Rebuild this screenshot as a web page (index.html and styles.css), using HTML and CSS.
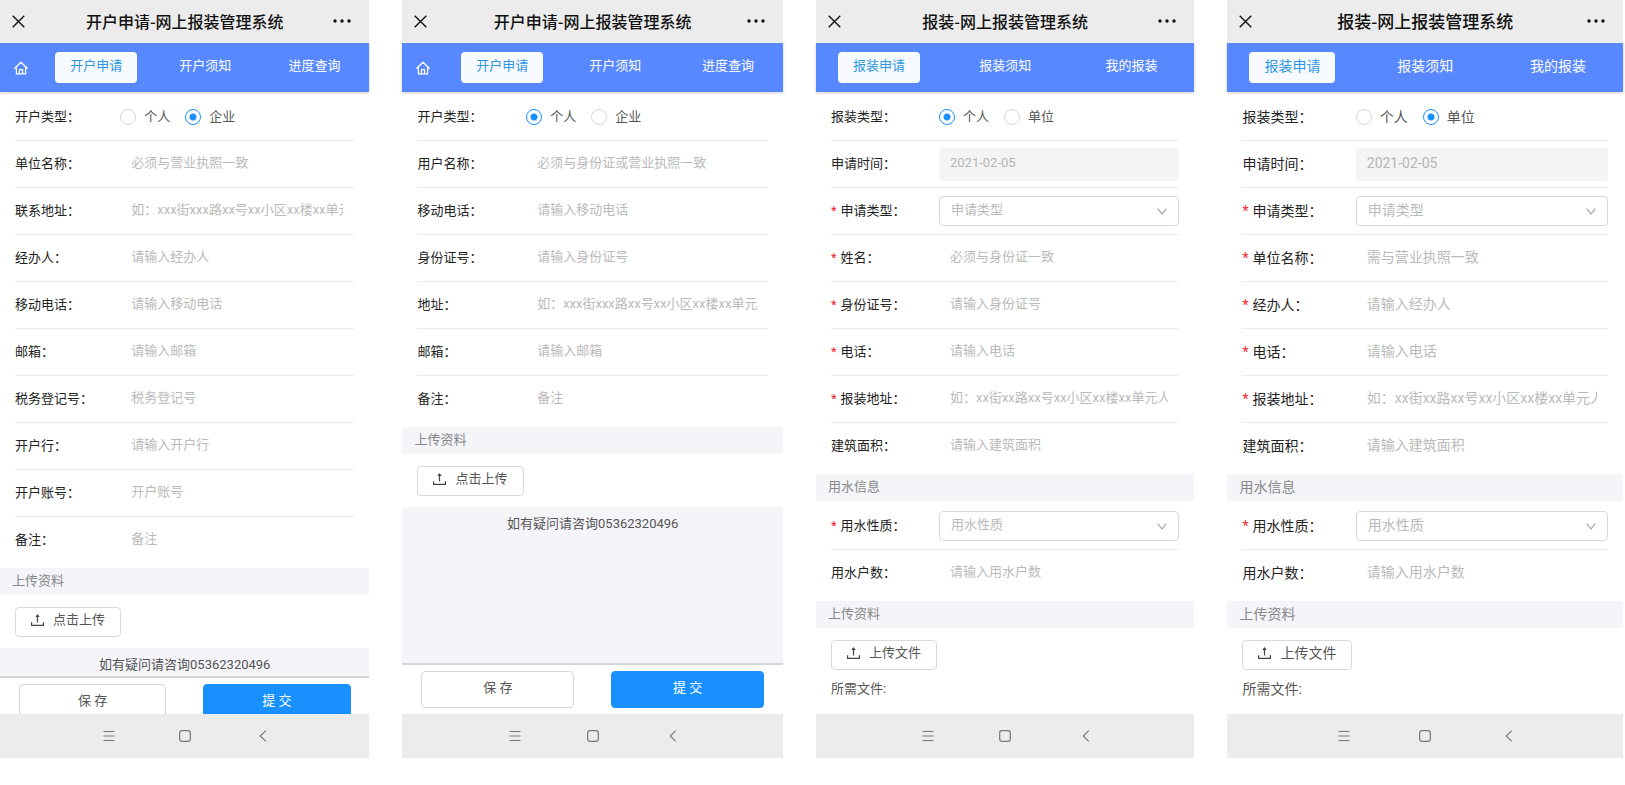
FILE: index.html
```html
<!DOCTYPE html>
<html lang="zh-CN">
<head>
  <meta charset="UTF-8" />
  <meta name="viewport" content="width=device-width, initial-scale=1.0"/>
  <title>网上报装管理系统</title>
  <link rel="stylesheet" href="styles.css">
</head>
<body>
  <!-- Shared icons -->
  <svg class="icon-defs" aria-hidden="true">
    <symbol id="i-close" viewBox="0 0 13 13"><path d="M.7.7l11.6 11.6M12.3.7L.7 12.3" fill="none" stroke="#111" stroke-width="1.4"/></symbol>
    <symbol id="i-more" viewBox="0 0 18 4"><g fill="#111"><circle cx="2" cy="2" r="1.7"/><circle cx="9" cy="2" r="1.7"/><circle cx="16" cy="2" r="1.7"/></g></symbol>
    <symbol id="i-home" viewBox="0 0 14 14"><path d="M.7 7.3L7 1.2l6.3 6.1M2.4 6v6.9h9.2V6M5.4 12.9V8.7h3.2v4.2" fill="none" stroke="#fff" stroke-width="1.2" stroke-linecap="round" stroke-linejoin="round"/></symbol>
    <symbol id="i-upload" viewBox="0 0 13 13"><path d="M.6 8.2v3.2h11.8V8.2M6.500 8.400V1.500" fill="none" stroke="#444" stroke-width="1.2"/><path d="M6.500 0L4.300 3h4.400z" fill="#444"/></symbol>
    <symbol id="i-menu" viewBox="0 0 12 12"><path d="M.5 1.500h11M.5 6h11M.5 10.500h11" fill="none" stroke="#777" stroke-width="1"/></symbol>
    <symbol id="i-square" viewBox="0 0 12 12"><rect x=".7" y=".7" width="10.6" height="10.6" rx="2.2" fill="none" stroke="#777" stroke-width="1.2"/></symbol>
    <symbol id="i-back" viewBox="0 0 12 12"><path d="M11.8.7L6.2 6l5.6 5.3" fill="none" stroke="#777" stroke-width="1.1"/></symbol>
    <symbol id="i-down" viewBox="0 0 10 7"><path d="M.7.7L5 6 9.3.7" fill="none" stroke="#aaa" stroke-width="1.2"/></symbol>
  </svg>

  <main class="phones">
    <!-- Open account: company -->
    <section class="phone">
      <header class="title-bar">
        <button class="icon-btn close" aria-label="关闭"><svg width="13" height="13"><use href="#i-close"/></svg></button>
        <h1>开户申请-网上报装管理系统</h1>
        <button class="icon-btn more" aria-label="更多"><svg width="18" height="4"><use href="#i-more"/></svg></button>
      </header>
      <nav class="tabs with-home">
        <a class="home" href="#" aria-label="首页"><svg width="14" height="14"><use href="#i-home"/></svg></a>
        <a class="tab active" href="#">开户申请</a>
        <a class="tab" href="#">开户须知</a>
        <a class="tab" href="#">进度查询</a>
      </nav>
      <form class="content">
        <div class="fields">
          <div class="row" role="radiogroup" aria-labelledby="a-type">
            <span class="label" id="a-type">开户类型：</span>
            <label class="radio"><input type="radio" name="a-type">个人</label>
            <label class="radio"><input type="radio" name="a-type" checked>企业</label>
          </div>
          <div class="row"><label class="label" for="a-name">单位名称：</label><input class="text" id="a-name" type="text" placeholder="必须与营业执照一致"></div>
          <div class="row"><label class="label" for="a-addr">联系地址：</label><input class="text" id="a-addr" type="text" placeholder="如：xxx街xxx路xx号xx小区xx楼xx单元"></div>
          <div class="row"><label class="label" for="a-agent">经办人：</label><input class="text" id="a-agent" type="text" placeholder="请输入经办人"></div>
          <div class="row"><label class="label" for="a-phone">移动电话：</label><input class="text" id="a-phone" type="tel" placeholder="请输入移动电话"></div>
          <div class="row"><label class="label" for="a-mail">邮箱：</label><input class="text" id="a-mail" type="email" placeholder="请输入邮箱"></div>
          <div class="row"><label class="label" for="a-tax">税务登记号：</label><input class="text" id="a-tax" type="text" placeholder="税务登记号"></div>
          <div class="row"><label class="label" for="a-bank">开户行：</label><input class="text" id="a-bank" type="text" placeholder="请输入开户行"></div>
          <div class="row"><label class="label" for="a-account">开户账号：</label><input class="text" id="a-account" type="text" placeholder="开户账号"></div>
          <div class="row"><label class="label" for="a-note">备注：</label><input class="text" id="a-note" type="text" placeholder="备注"></div>
        </div>
        <h2 class="section-title">上传资料</h2>
        <div class="upload">
          <button class="btn upload-btn" type="button"><svg width="13" height="13"><use href="#i-upload"/></svg>点击上传</button>
        </div>
        <p class="hint">如有疑问请咨询05362320496</p>
        <div class="actions">
          <button class="btn" type="button">保 存</button>
          <button class="btn primary" type="button">提 交</button>
        </div>
      </form>
      <footer class="system-bar">
        <button class="icon-btn" aria-label="菜单"><svg width="12" height="12"><use href="#i-menu"/></svg></button>
        <button class="icon-btn" aria-label="主屏幕"><svg width="12" height="12"><use href="#i-square"/></svg></button>
        <button class="icon-btn" aria-label="返回"><svg width="12" height="12"><use href="#i-back"/></svg></button>
      </footer>
    </section>

    <!-- Open account: personal -->
    <section class="phone">
      <header class="title-bar">
        <button class="icon-btn close" aria-label="关闭"><svg width="13" height="13"><use href="#i-close"/></svg></button>
        <h1>开户申请-网上报装管理系统</h1>
        <button class="icon-btn more" aria-label="更多"><svg width="18" height="4"><use href="#i-more"/></svg></button>
      </header>
      <nav class="tabs with-home">
        <a class="home" href="#" aria-label="首页"><svg width="14" height="14"><use href="#i-home"/></svg></a>
        <a class="tab active" href="#">开户申请</a>
        <a class="tab" href="#">开户须知</a>
        <a class="tab" href="#">进度查询</a>
      </nav>
      <form class="content">
        <div class="fields">
          <div class="row" role="radiogroup" aria-labelledby="b-type">
            <span class="label" id="b-type">开户类型：</span>
            <label class="radio"><input type="radio" name="b-type" checked>个人</label>
            <label class="radio"><input type="radio" name="b-type">企业</label>
          </div>
          <div class="row"><label class="label" for="b-name">用户名称：</label><input class="text" id="b-name" type="text" placeholder="必须与身份证或营业执照一致"></div>
          <div class="row"><label class="label" for="b-phone">移动电话：</label><input class="text" id="b-phone" type="tel" placeholder="请输入移动电话"></div>
          <div class="row"><label class="label" for="b-card">身份证号：</label><input class="text" id="b-card" type="text" placeholder="请输入身份证号"></div>
          <div class="row"><label class="label" for="b-addr">地址：</label><input class="text" id="b-addr" type="text" placeholder="如：xxx街xxx路xx号xx小区xx楼xx单元"></div>
          <div class="row"><label class="label" for="b-mail">邮箱：</label><input class="text" id="b-mail" type="email" placeholder="请输入邮箱"></div>
          <div class="row"><label class="label" for="b-note">备注：</label><input class="text" id="b-note" type="text" placeholder="备注"></div>
        </div>
        <h2 class="section-title">上传资料</h2>
        <div class="upload">
          <button class="btn upload-btn" type="button"><svg width="13" height="13"><use href="#i-upload"/></svg>点击上传</button>
        </div>
        <p class="hint">如有疑问请咨询05362320496</p>
        <div class="actions">
          <button class="btn" type="button">保 存</button>
          <button class="btn primary" type="button">提 交</button>
        </div>
      </form>
      <footer class="system-bar">
        <button class="icon-btn" aria-label="菜单"><svg width="12" height="12"><use href="#i-menu"/></svg></button>
        <button class="icon-btn" aria-label="主屏幕"><svg width="12" height="12"><use href="#i-square"/></svg></button>
        <button class="icon-btn" aria-label="返回"><svg width="12" height="12"><use href="#i-back"/></svg></button>
      </footer>
    </section>

    <!-- Installation: personal -->
    <section class="phone">
      <header class="title-bar">
        <button class="icon-btn close" aria-label="关闭"><svg width="13" height="13"><use href="#i-close"/></svg></button>
        <h1>报装-网上报装管理系统</h1>
        <button class="icon-btn more" aria-label="更多"><svg width="18" height="4"><use href="#i-more"/></svg></button>
      </header>
      <nav class="tabs">
        <a class="tab active" href="#">报装申请</a>
        <a class="tab" href="#">报装须知</a>
        <a class="tab" href="#">我的报装</a>
      </nav>
      <form class="content">
        <div class="fields">
          <div class="row" role="radiogroup" aria-labelledby="c-type">
            <span class="label" id="c-type">报装类型：</span>
            <label class="radio"><input type="radio" name="c-type" checked>个人</label>
            <label class="radio"><input type="radio" name="c-type">单位</label>
          </div>
          <div class="row"><label class="label" for="c-date">申请时间：</label><input class="text" id="c-date" type="text" value="2021-02-05" disabled></div>
          <div class="row">
            <label class="label required" for="c-kind">申请类型：</label>
            <div class="select"><select id="c-kind"><option>申请类型</option></select><svg width="10" height="7"><use href="#i-down"/></svg></div>
          </div>
          <div class="row"><label class="label required" for="c-name">姓名：</label><input class="text" id="c-name" type="text" placeholder="必须与身份证一致"></div>
          <div class="row"><label class="label required" for="c-card">身份证号：</label><input class="text" id="c-card" type="text" placeholder="请输入身份证号"></div>
          <div class="row"><label class="label required" for="c-phone">电话：</label><input class="text" id="c-phone" type="tel" placeholder="请输入电话"></div>
          <div class="row"><label class="label required" for="c-addr">报装地址：</label><input class="text" id="c-addr" type="text" placeholder="如：xx街xx路xx号xx小区xx楼xx单元人"></div>
          <div class="row"><label class="label" for="c-area">建筑面积：</label><input class="text" id="c-area" type="text" placeholder="请输入建筑面积"></div>
        </div>
        <h2 class="section-title">用水信息</h2>
        <div class="fields">
          <div class="row">
            <label class="label required" for="c-water">用水性质：</label>
            <div class="select"><select id="c-water"><option>用水性质</option></select><svg width="10" height="7"><use href="#i-down"/></svg></div>
          </div>
          <div class="row"><label class="label" for="c-count">用水户数：</label><input class="text" id="c-count" type="text" placeholder="请输入用水户数"></div>
        </div>
        <h2 class="section-title">上传资料</h2>
        <div class="upload">
          <button class="btn upload-btn" type="button"><svg width="13" height="13"><use href="#i-upload"/></svg>上传文件</button>
          <p class="files">所需文件:</p>
        </div>
      </form>
      <footer class="system-bar">
        <button class="icon-btn" aria-label="菜单"><svg width="12" height="12"><use href="#i-menu"/></svg></button>
        <button class="icon-btn" aria-label="主屏幕"><svg width="12" height="12"><use href="#i-square"/></svg></button>
        <button class="icon-btn" aria-label="返回"><svg width="12" height="12"><use href="#i-back"/></svg></button>
      </footer>
    </section>

    <!-- Installation: company -->
    <section class="phone large">
      <header class="title-bar">
        <button class="icon-btn close" aria-label="关闭"><svg width="13" height="13"><use href="#i-close"/></svg></button>
        <h1>报装-网上报装管理系统</h1>
        <button class="icon-btn more" aria-label="更多"><svg width="18" height="4"><use href="#i-more"/></svg></button>
      </header>
      <nav class="tabs">
        <a class="tab active" href="#">报装申请</a>
        <a class="tab" href="#">报装须知</a>
        <a class="tab" href="#">我的报装</a>
      </nav>
      <form class="content">
        <div class="fields">
          <div class="row" role="radiogroup" aria-labelledby="d-type">
            <span class="label" id="d-type">报装类型：</span>
            <label class="radio"><input type="radio" name="d-type">个人</label>
            <label class="radio"><input type="radio" name="d-type" checked>单位</label>
          </div>
          <div class="row"><label class="label" for="d-date">申请时间：</label><input class="text" id="d-date" type="text" value="2021-02-05" disabled></div>
          <div class="row">
            <label class="label required" for="d-kind">申请类型：</label>
            <div class="select"><select id="d-kind"><option>申请类型</option></select><svg width="10" height="7"><use href="#i-down"/></svg></div>
          </div>
          <div class="row"><label class="label required" for="d-name">单位名称：</label><input class="text" id="d-name" type="text" placeholder="需与营业执照一致"></div>
          <div class="row"><label class="label required" for="d-agent">经办人：</label><input class="text" id="d-agent" type="text" placeholder="请输入经办人"></div>
          <div class="row"><label class="label required" for="d-phone">电话：</label><input class="text" id="d-phone" type="tel" placeholder="请输入电话"></div>
          <div class="row"><label class="label required" for="d-addr">报装地址：</label><input class="text" id="d-addr" type="text" placeholder="如：xx街xx路xx号xx小区xx楼xx单元人"></div>
          <div class="row"><label class="label" for="d-area">建筑面积：</label><input class="text" id="d-area" type="text" placeholder="请输入建筑面积"></div>
        </div>
        <h2 class="section-title">用水信息</h2>
        <div class="fields">
          <div class="row">
            <label class="label required" for="d-water">用水性质：</label>
            <div class="select"><select id="d-water"><option>用水性质</option></select><svg width="10" height="7"><use href="#i-down"/></svg></div>
          </div>
          <div class="row"><label class="label" for="d-count">用水户数：</label><input class="text" id="d-count" type="text" placeholder="请输入用水户数"></div>
        </div>
        <h2 class="section-title">上传资料</h2>
        <div class="upload">
          <button class="btn upload-btn" type="button"><svg width="13" height="13"><use href="#i-upload"/></svg>上传文件</button>
          <p class="files">所需文件:</p>
        </div>
      </form>
      <footer class="system-bar">
        <button class="icon-btn" aria-label="菜单"><svg width="12" height="12"><use href="#i-menu"/></svg></button>
        <button class="icon-btn" aria-label="主屏幕"><svg width="12" height="12"><use href="#i-square"/></svg></button>
        <button class="icon-btn" aria-label="返回"><svg width="12" height="12"><use href="#i-back"/></svg></button>
      </footer>
    </section>
  </main>
</body>
</html>
```

FILE: styles.css
```css
* {
  box-sizing: border-box;
}
body {
  margin: 0;
  background: #fff;
  color: #555;
  font-family: Roboto, "Noto Sans CJK SC", sans-serif;
}
h1, h2, p {
  margin: 0;
  font-weight: 400;
}
a {
  text-decoration: none;
}
button, input, select {
  font: inherit;
  margin: 0;
}
svg {
  display: block;
  flex: none;
}
.icon-defs {
  display: none;
}

.phones {
  display: grid;
  grid-template-columns: 369fr 380fr 378fr 395fr;
  gap: 33px;
  padding-right: 2px;
}
.phone {
  display: flex;
  flex-direction: column;
  height: calc(100vh - 27px);
  min-width: 0;
  font-size: 13px;
  line-height: 20px;
}
.phone.large {
  font-size: 14px;
}

/* Title bar */
.title-bar {
  flex: none;
  display: grid;
  grid-template-columns: 36px 1fr 36px;
  align-items: center;
  height: 43px;
  background: #ececec;
  border-bottom: 1px solid #f8f8ee;
}
.title-bar h1 {
  font-family: "Noto Sans CJK SC", sans-serif;
  font-size: 16px;
  font-weight: 500;
  line-height: 24px;
  color: #111;
  text-align: center;
  white-space: nowrap;
}
.large .title-bar h1 {
  font-size: 17px;
}
.icon-btn {
  display: flex;
  padding: 0;
  border: 0;
  background: none;
}
.close {
  padding-left: 12px;
}

/* Tabs */
.tabs {
  flex: none;
  display: flex;
  align-items: center;
  justify-content: space-between;
  height: 49px;
  padding: 0 22px;
  background: #5788ff;
  box-shadow: 0 1px 3px rgba(0, 0, 0, 0.2);
  z-index: 1;
}
.tabs.with-home {
  padding: 0 14px;
}
.tab {
  height: 31px;
  padding: 4px 15px;
  border-radius: 4px;
  color: #fff;
}
.tab.active {
  background: #f7faff;
  color: #2d97e0;
}

/* Form */
.content {
  flex: 1;
  display: flex;
  flex-direction: column;
  min-height: 0;
  overflow: hidden;
}
.fields {
  flex: none;
  padding: 2px 15px 4px;
}
.row {
  display: flex;
  align-items: center;
  height: 47px;
  border-bottom: 1px solid #ebebeb;
}
.row:last-child {
  border-bottom-color: transparent;
}
.label {
  flex: none;
  width: 31%;
  color: #222;
  white-space: nowrap;
}
.required::before {
  content: "*";
  margin-right: 4px;
  color: #f5222d;
}
.text {
  flex: 1;
  min-width: 0;
  height: 33px;
  padding: 0 11px 3px;
  border: 0;
  border-radius: 3px;
  background: none;
}
.text::placeholder {
  color: #bababa;
}
.text:disabled {
  background: #f4f4f4;
  color: #b5b5b5;
}
.select {
  flex: 1;
  display: grid;
  align-items: center;
}
.select select, .select svg {
  grid-area: 1 / 1;
}
.select select {
  appearance: none;
  width: 100%;
  height: 30px;
  padding: 0 28px 2px 11px;
  border: 1px solid #d9d9d9;
  border-radius: 4px;
  background: #fff;
  color: #bababa;
}
.select svg {
  justify-self: end;
  margin-right: 12px;
  pointer-events: none;
}
.radio {
  display: flex;
  align-items: center;
  gap: 8px;
  margin-right: 15px;
}
.radio input {
  appearance: none;
  width: 16px;
  height: 16px;
  border: 1px solid #d9d9d9;
  border-radius: 50%;
  background: #fff;
}
.radio input:checked {
  border-color: #1890ff;
  background: radial-gradient(circle, #1890ff 3px, #fff 4px);
}

.section-title {
  flex: none;
  height: 27px;
  padding: 3px 12px;
  background: #f4f4f9;
  font-size: inherit;
  color: #888;
}

/* Upload and actions */
.upload {
  flex: none;
  padding: 12px 15px 11px;
}
.btn {
  padding: 0 15px 4px;
  border: 1px solid #d9d9d9;
  border-radius: 4px;
  background: #fff;
  color: #555;
}
.btn.primary {
  border-color: #1890ff;
  background: #1890ff;
  color: #fff;
}
.upload-btn {
  display: flex;
  align-items: center;
  gap: 9px;
  height: 30px;
}
.files {
  margin-top: 9px;
}
.hint {
  flex: 1 0 auto;
  padding: 7px 0 1px;
  background: #f4f4f9;
  text-align: center;
}
.actions {
  flex: none;
  display: flex;
  gap: 37px;
  padding: 6px 19px;
  border-top: 2px solid #d5d5d8;
}
.actions .btn {
  flex: 1;
  height: 37px;
}

/* System bar */
.system-bar {
  flex: none;
  display: flex;
  align-items: center;
  justify-content: space-between;
  height: 44px;
  padding: 0 28%;
  background: #ececec;
}
```
